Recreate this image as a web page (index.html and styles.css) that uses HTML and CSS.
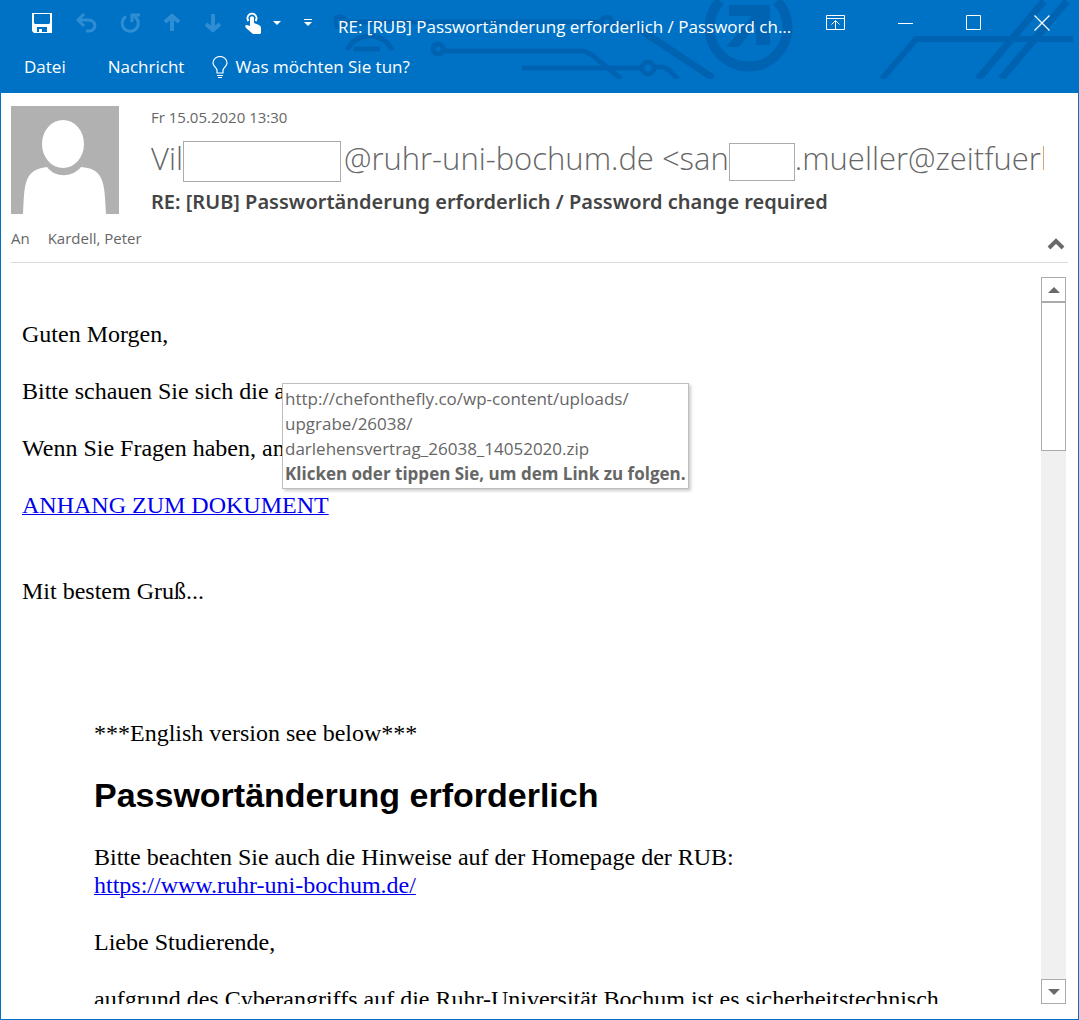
FILE: index.html
```html
<!DOCTYPE html>
<html lang="de">
<head>
<meta charset="utf-8">
<meta name="viewport" content="width=device-width, initial-scale=1">
<title>RE: [RUB] Passwortänderung erforderlich / Password change required</title>
<link rel="stylesheet" href="styles.css">
</head>
<body>
<div class="window">
  <header class="chrome">
    <svg class="circuit" width="740" height="79" viewBox="334 0 740 79" fill="none" stroke="#0063b1" stroke-width="5" aria-hidden="true">
      <circle cx="340" cy="22" r="5"/><path d="M346 22h256"/><circle cx="607" cy="22" r="5"/>
      <path d="M347 50a25 25 0 0 1 45 0M354 49h26"/>
      <circle cx="438" cy="49" r="5"/><path d="M443 51h141l8 4 29 24"/>
      <path d="M522 68h121"/><circle cx="648" cy="68" r="6"/><path d="M654 67h9l6 3 9 9"/>
      <path d="M610 24h20l12 7 71 47" stroke-width="7"/>
      <path d="M720 1a39 39 0 1 0 57 0" stroke-width="10"/>
      <path d="M729 5h41v40h-14V26l-17 21h-13l26-31h-23z" fill="#0063b1" stroke="none"/>
      <path d="M882 79l34-40h157" stroke-width="6"/>
      <path d="M978 79l66-78M1001 79l66-78" stroke-width="7"/>
    </svg>
    <div class="titlebar">
      <div class="quick">
        <button type="button" class="tool" aria-label="Speichern"><svg width="20" height="20" viewBox="0 0 20 20"><path fill="#fff" fill-rule="evenodd" d="M0 0h20v20H2l-2-2zM2 1v9l1 1h14l1-1V1zM5 14v5h2v-3h3v3h5v-5z"/></svg></button>
        <button type="button" class="tool dim" aria-label="Rückgängig"><svg width="22" height="20" viewBox="0 0 22 20" fill="none" stroke="currentColor" stroke-width="3"><path d="M9 1L3 7l6 6M3 7h10c9 0 9 11 1 11h-3"/></svg></button>
        <button type="button" class="tool dim" aria-label="Wiederholen"><svg width="20" height="20" viewBox="0 0 20 20" fill="none" stroke="currentColor" stroke-width="3"><path d="M6 3.500a8 8 0 1 0 8.500 0M12 9V2h8"/></svg></button>
        <button type="button" class="tool dim" aria-label="Vorheriges Element"><svg width="18" height="20" viewBox="0 0 18 20" fill="none" stroke="currentColor" stroke-width="4"><path d="M9 18V4M2 9l7-6 7 6"/></svg></button>
        <button type="button" class="tool dim" aria-label="Nächstes Element"><svg width="18" height="20" viewBox="0 0 18 20" fill="none" stroke="currentColor" stroke-width="4"><path d="M9 1v14M2 11l7 6 7-6"/></svg></button>
        <button type="button" class="tool touch" aria-label="Touch-/Mausmodus"><svg width="16" height="22" viewBox="0 0 16 22"><path d="M3.500 9a4.500 4.500 0 1 1 7 0" fill="none" stroke="#fff" stroke-width="2"/><path fill="#fff" d="M5 5.500q2-2.500 4 0V11l5 2q2 1 2 3v5l-1 1H8l-7-6q-2-3 1-3l3 1z"/></svg><svg width="8" height="5" viewBox="0 0 8 5"><path fill="#fff" d="M0 0h8L4 4z"/></svg></button>
        <button type="button" class="tool more" aria-label="Symbolleiste anpassen"><svg width="8" height="8" viewBox="0 0 8 8"><path fill="#fff" d="M0 0h8v1H0zM0 3h8L4 7z"/></svg></button>
      </div>
      <div class="title">RE: [RUB] Passwortänderung erforderlich / Password ch...</div>
      <div class="controls">
        <button type="button" class="control" aria-label="Menüband-Anzeigeoptionen"><svg width="20" height="16" viewBox="0 0 20 16" fill="none" stroke="#fff"><path d="M.5.5h18v14H.5zM1 3.500h18M9.500 14V6M5.500 9.500l4-4 4 4"/></svg></button>
        <button type="button" class="control" aria-label="Minimieren"><svg width="16" height="16" viewBox="0 0 16 16" stroke="#fff"><path d="M0 8.500h15"/></svg></button>
        <button type="button" class="control" aria-label="Maximieren"><svg width="16" height="16" viewBox="0 0 16 16" fill="none" stroke="#fff"><path d="M.5.5h14v14H.5z"/></svg></button>
        <button type="button" class="control" aria-label="Schließen"><svg width="16" height="16" viewBox="0 0 16 16" stroke="#fff" stroke-width="1.200"><path d="M.5.5l15 15M15.500.5l-15 15"/></svg></button>
      </div>
    </div>
    <nav class="tabs">
      <button type="button" class="tab">Datei</button>
      <button type="button" class="tab">Nachricht</button>
      <button type="button" class="tab tell"><svg width="16" height="22" viewBox="0 0 16 22" fill="none" stroke="#fff" stroke-width="1.200"><path d="M5 17v-3C4 11 1 10 1 7a7 6.500 0 0 1 14 0c0 3-3 4-4 7v3zM5 19.500h6M6 21.500h4"/></svg>Was möchten Sie tun?</button>
    </nav>
  </header>

  <section class="head">
    <svg class="avatar" width="108" height="108" viewBox="0 0 108 108" aria-hidden="true"><path fill="#b1b1b1" d="M0 0h108v108H0z"/><ellipse cx="52" cy="38" rx="21" ry="24" fill="#fff"/><path fill="#fff" d="M12 108c1-20 1-30 6-38 4-6 10-8 18-9 8 11 25 11 34 0 10 1 16 3 20 11 4 8 4 20 5 36z"/></svg>
    <div class="meta">
      <div class="date">Fr 15.05.2020 13:30</div>
      <div class="sender">Vil<span class="redacted wide"></span>@ruhr-uni-bochum.de &lt;san<span class="redacted"></span>.mueller@zeitfuerl</div>
      <h1 class="subject">RE: [RUB] Passwortänderung erforderlich / Password change required</h1>
    </div>
    <div class="to"><span>An</span><span>Kardell, Peter</span></div>
    <button type="button" class="collapse" aria-label="Kopfzeile reduzieren"><svg width="18" height="12" viewBox="0 0 18 12" fill="none" stroke="#6a6a6a" stroke-width="4"><path d="M2 10l7-7 7 7"/></svg></button>
  </section>

  <main class="reader">
    <article class="mail">
      <p>Guten Morgen,</p>
      <p>Bitte schauen Sie sich die angehängte Datei</p>
      <p>Wenn Sie Fragen haben, an</p>
      <p class="anchor"><a href="#anhang">ANHANG ZUM DOKUMENT</a>
        <span class="tooltip" role="tooltip">http://chefonthefly.co/wp-content/uploads/<br>upgrabe/26038/<br>darlehensvertrag_26038_14052020.zip<br><strong>Klicken oder tippen Sie, um dem Link zu folgen.</strong></span></p>
      <p class="closing">Mit bestem Gruß...</p>
      <div class="quoted">
        <p>***English version see below***</p>
        <h2>Passwortänderung erforderlich</h2>
        <p>Bitte beachten Sie auch die Hinweise auf der Homepage der RUB:<br><a href="#rub">https://www.ruhr-uni-bochum.de/</a></p>
        <p>Liebe Studierende,</p>
        <p>aufgrund des Cyberangriffs auf die Ruhr-Universität Bochum ist es sicherheitstechnisch</p>
      </div>
    </article>
    <div class="scrollbar">
      <button type="button" class="arrow" aria-label="Nach oben"><svg width="12" height="6" viewBox="0 0 12 6"><path fill="#6a6a6a" d="M0 6h12L6 0z"/></svg></button>
      <div class="track"><div class="thumb"></div></div>
      <button type="button" class="arrow" aria-label="Nach unten"><svg width="12" height="6" viewBox="0 0 12 6"><path fill="#6a6a6a" d="M0 0h12L6 6z"/></svg></button>
    </div>
  </main>
</div>
</body>
</html>
```
FILE: styles.css
```css
* { box-sizing: border-box; }
body { margin: 0; background: #fff; font-family: "Open Sans", "Noto Sans", sans-serif; }
button { margin: 0; padding: 0; border: 0; background: none; color: inherit; font: inherit; }
svg { display: block; flex: none; }

.window { height: 100vh; display: flex; flex-direction: column; border: 1px solid #0072c6; border-top: 0; }

.chrome { position: relative; flex: none; background: #0072c6; color: #fff; padding-bottom: 5px; }
.circuit { position: absolute; top: 0; right: 4px; }
.titlebar { position: relative; display: flex; align-items: center; height: 46px; padding-left: 31px; padding-right: 28px; }
.quick { display: flex; align-items: center; flex: none; gap: 23px; width: 306px; }
.tool { display: flex; align-items: center; }
.tool.dim { color: #2f8dd4; }
.tool.touch { gap: 12px; }
.title { flex: 1; min-width: 0; overflow: hidden; white-space: nowrap; font-size: 17px; line-height: 24px; padding-top: 8px; }
.controls { display: flex; flex: none; gap: 52px; }
.control { display: flex; align-items: center; }

.tabs { position: relative; display: flex; gap: 42px; padding-left: 23px; height: 42px; }
.tab { display: flex; align-items: center; font-size: 17px; line-height: 24px; white-space: nowrap; }
.tell { gap: 7px; margin-left: -14px; }

.head { position: relative; flex: none; display: grid; grid-template-columns: 108px 1fr; column-gap: 32px; margin: 0 10px; padding-top: 13px; border-bottom: 1px solid #d9d9d9; color: #666; }
.meta { min-width: 0; padding-right: 24px; }
.date { font-size: 15px; line-height: 22px; }
.sender { height: 58px; line-height: 60px; font-size: 31px; font-weight: 300; white-space: nowrap; overflow: hidden; }
.redacted { display: inline-block; vertical-align: middle; width: 66px; height: 38px; border: 1px solid #ababab; background: #fff; }
.redacted.wide { width: 158px; height: 41px; margin-right: 3px; }
.subject { margin: 0; font-family: "Noto Sans", "Open Sans", sans-serif; font-size: 20px; line-height: 32px; font-weight: 600; color: #444; white-space: nowrap; }
.to { grid-column: 1 / -1; display: flex; gap: 18px; font-size: 15px; line-height: 20px; padding: 10px 0 14px; }
.collapse { position: absolute; right: 3px; bottom: 12px; }

.reader { flex: 1; min-height: 0; display: flex; margin: 14px 12px 15px 10px; }
.mail { flex: 1; min-width: 0; overflow: hidden; padding: 43px 11px 0; color: #000; font-family: "Liberation Serif", "Times New Roman", serif; font-size: 24px; line-height: 28px; }
.mail p { margin: 0 0 29px; white-space: nowrap; }
.mail a { color: #0000ee; text-decoration-thickness: 1px; }
.mail .closing { margin: 58px 0 114px; }
.quoted { padding-left: 72px; }
.quoted h2 { margin: 0 0 29px; font-family: "Liberation Sans", Arial, sans-serif; font-size: 34px; line-height: 38px; }
.anchor { position: relative; }
.tooltip { position: absolute; left: 260px; bottom: 30px; padding: 2px; border: 1px solid #bebebe; background: #fff; box-shadow: 2px 2px 3px rgba(0, 0, 0, .2); color: #666; font-family: "Open Sans", "Noto Sans", sans-serif; font-size: 17px; line-height: 25px; }

.scrollbar { flex: none; width: 25px; display: flex; flex-direction: column; background: #f0f0f0; }
.arrow { height: 25px; display: flex; align-items: center; justify-content: center; border: 1px solid #ababab; background: #fff; }
.track { flex: 1; }
.thumb { height: 22%; border: 1px solid #ababab; background: #fff; }
```
